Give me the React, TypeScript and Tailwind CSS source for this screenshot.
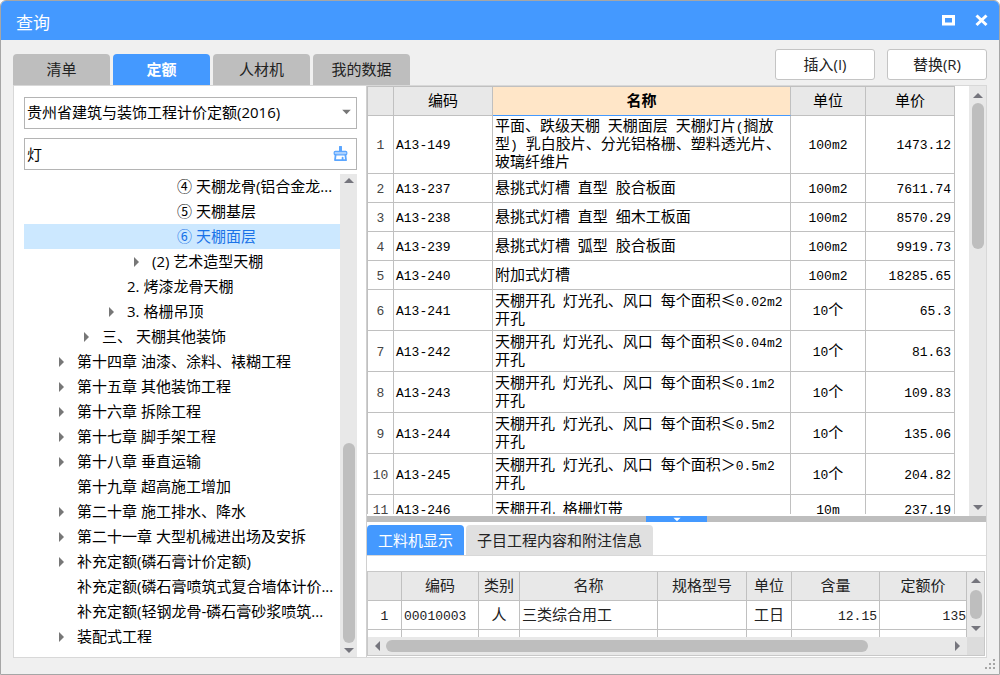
import { useState, type ReactNode } from "react";

type Direction = "up" | "down" | "left" | "right";

const arrowPoints: Record<Direction, string> = {
  up: "0,6 5,1 10,6",
  down: "0,1 5,6 10,1",
  left: "6,0 1,5 6,10",
  right: "1,0 6,5 1,10",
};

function Arrow({ direction, className }: { direction: Direction; className: string }) {
  const upright = direction === "up" || direction === "down";
  return (
    <svg viewBox={upright ? "0 0 10 7" : "0 0 7 10"} className={className} aria-hidden="true">
      <polygon points={arrowPoints[direction]} fill="currentColor" />
    </svg>
  );
}

/* Sets Latin runs in a narrower monospaced face beside the Chinese text. */
function MixedText({ children }: { children: string }) {
  const parts = children.split(/([\x20-\x7e]+)/);
  return (
    <>
      {parts.map((part, i) =>
        i % 2 === 1 ? (
          <span key={i} className="font-['Liberation_Mono','Noto_Sans_CJK_SC',monospace] text-[13px] leading-none">
            {part}
          </span>
        ) : (
          part
        ),
      )}
    </>
  );
}

const categoryTabs = ["清单", "定额", "人材机", "我的数据"];

interface TreeItem {
  label: string;
  indent: string;
  expandable?: boolean;
}

const tree: TreeItem[] = [
  { label: "④ 天棚龙骨(铝合金龙...", indent: "pl-[134px]" },
  { label: "⑤ 天棚基层", indent: "pl-[134px]" },
  { label: "⑥ 天棚面层", indent: "pl-[134px]" },
  { label: "(2) 艺术造型天棚", indent: "pl-[109px]", expandable: true },
  { label: "2. 烤漆龙骨天棚", indent: "pl-[84px]" },
  { label: "3. 格栅吊顶", indent: "pl-[84px]", expandable: true },
  { label: "三、 天棚其他装饰", indent: "pl-[59px]", expandable: true },
  { label: "第十四章 油漆、涂料、裱糊工程", indent: "pl-[34px]", expandable: true },
  { label: "第十五章 其他装饰工程", indent: "pl-[34px]", expandable: true },
  { label: "第十六章 拆除工程", indent: "pl-[34px]", expandable: true },
  { label: "第十七章 脚手架工程", indent: "pl-[34px]", expandable: true },
  { label: "第十八章 垂直运输", indent: "pl-[34px]", expandable: true },
  { label: "第十九章 超高施工增加", indent: "pl-[34px]" },
  { label: "第二十章 施工排水、降水", indent: "pl-[34px]", expandable: true },
  { label: "第二十一章 大型机械进出场及安拆", indent: "pl-[34px]", expandable: true },
  { label: "补充定额(磷石膏计价定额)", indent: "pl-[34px]", expandable: true },
  { label: "补充定额(磷石膏喷筑式复合墙体计价...", indent: "pl-[34px]" },
  { label: "补充定额(轻钢龙骨-磷石膏砂浆喷筑...", indent: "pl-[34px]" },
  { label: "装配式工程", indent: "pl-[34px]", expandable: true },
];

interface Quota {
  code: string;
  name: string;
  unit: string;
  price: string;
  height: string;
}

const oneLine = "h-[29px]";
const twoLines = "h-[41px]";
const threeLines = "h-[58px]";

const quotas: Quota[] = [
  { code: "A13-149", name: "平面、跌级天棚 天棚面层 天棚灯片(搁放型) 乳白胶片、分光铝格栅、塑料透光片、玻璃纤维片", unit: "100m2", price: "1473.12", height: threeLines },
  { code: "A13-237", name: "悬挑式灯槽 直型 胶合板面", unit: "100m2", price: "7611.74", height: oneLine },
  { code: "A13-238", name: "悬挑式灯槽 直型 细木工板面", unit: "100m2", price: "8570.29", height: oneLine },
  { code: "A13-239", name: "悬挑式灯槽 弧型 胶合板面", unit: "100m2", price: "9919.73", height: oneLine },
  { code: "A13-240", name: "附加式灯槽", unit: "100m2", price: "18285.65", height: oneLine },
  { code: "A13-241", name: "天棚开孔 灯光孔、风口 每个面积≤0.02m2 开孔", unit: "10个", price: "65.3", height: twoLines },
  { code: "A13-242", name: "天棚开孔 灯光孔、风口 每个面积≤0.04m2 开孔", unit: "10个", price: "81.63", height: twoLines },
  { code: "A13-243", name: "天棚开孔 灯光孔、风口 每个面积≤0.1m2 开孔", unit: "10个", price: "109.83", height: twoLines },
  { code: "A13-244", name: "天棚开孔 灯光孔、风口 每个面积≤0.5m2 开孔", unit: "10个", price: "135.06", height: twoLines },
  { code: "A13-245", name: "天棚开孔 灯光孔、风口 每个面积＞0.5m2 开孔", unit: "10个", price: "204.82", height: twoLines },
  { code: "A13-246", name: "天棚开孔 格栅灯带", unit: "10m", price: "237.19", height: oneLine },
];

function HeadCell({ children, className = "bg-[#e8e8e8] border-b-[#c0c0c0] font-normal" }: { children?: ReactNode; className?: string }) {
  return <th className={`h-[29px] border-r border-b border-r-[#c0c0c0] px-0 pt-0 pb-[2px] text-center ${className}`}>{children}</th>;
}

function Cell({ children, className = "" }: { children?: ReactNode; className?: string }) {
  return <td className={`border-r border-b border-[#c0c0c0] pt-0 pb-[3px] ${className}`}>{children}</td>;
}

function QuotaTable() {
  return (
    <table className="w-full table-fixed border-separate border-spacing-0 border-t border-l border-[#c0c0c0] font-['Noto_Sans_CJK_SC',sans-serif] leading-[18px]">
      <colgroup>
        <col className="w-[26px]" />
        <col className="w-[99px]" />
        <col />
        <col className="w-[75px]" />
        <col className="w-[89px]" />
      </colgroup>
      <thead>
        <tr>
          <HeadCell />
          <HeadCell>编码</HeadCell>
          <HeadCell className="border-b-[#4499ff] bg-[#ffe6c8] font-bold">名称</HeadCell>
          <HeadCell>单位</HeadCell>
          <HeadCell>单价</HeadCell>
        </tr>
      </thead>
      <tbody>
        {quotas.map((q, i) => (
          <tr key={q.code} className={q.height}>
            <Cell className="px-0 text-center text-[#444]">
              <MixedText>{String(i + 1)}</MixedText>
            </Cell>
            <Cell className="px-[2px]">
              <MixedText>{q.code}</MixedText>
            </Cell>
            <Cell className="px-[2px]">
              <MixedText>{q.name}</MixedText>
            </Cell>
            <Cell className="px-0 text-center">
              <MixedText>{q.unit}</MixedText>
            </Cell>
            <Cell className="px-[3px] text-right">
              <MixedText>{q.price}</MixedText>
            </Cell>
          </tr>
        ))}
      </tbody>
    </table>
  );
}

function ResourceTable() {
  return (
    <table className="w-full table-fixed border-separate border-spacing-0 font-['Noto_Sans_CJK_SC',sans-serif] leading-[18px] text-[#222]">
      <colgroup>
        <col className="w-[34px]" />
        <col className="w-[77px]" />
        <col className="w-[41px]" />
        <col />
        <col className="w-[89px]" />
        <col className="w-[45px]" />
        <col className="w-[88px]" />
        <col className="w-[87px]" />
      </colgroup>
      <thead>
        <tr>
          {["", "编码", "类别", "名称", "规格型号", "单位", "含量", "定额价"].map((h) => (
            <HeadCell key={h}>{h}</HeadCell>
          ))}
        </tr>
      </thead>
      <tbody>
        <tr className="h-[29px]">
          <Cell className="px-0 text-center"><MixedText>1</MixedText></Cell>
          <Cell className="px-[2px]"><MixedText>00010003</MixedText></Cell>
          <Cell className="px-0 text-center">人</Cell>
          <Cell className="px-[2px]">三类综合用工</Cell>
          <Cell />
          <Cell className="px-0 text-center">工日</Cell>
          <Cell className="px-[2px] text-right"><MixedText>12.15</MixedText></Cell>
          <Cell className="px-0 text-right"><MixedText>135</MixedText></Cell>
        </tr>
        <tr className="h-[29px]">
          {[0, 1, 2, 3, 4, 5, 6, 7].map((n) => (
            <Cell key={n} />
          ))}
        </tr>
      </tbody>
    </table>
  );
}

export default function App() {
  const [tab, setTab] = useState(1);
  const [detailTab, setDetailTab] = useState(0);
  const [selected, setSelected] = useState(2);
  const [query, setQuery] = useState("灯");

  return (
    <div
      lang="zh-CN"
      className="relative flex h-screen flex-col overflow-hidden rounded-t-md border border-[#a6a6a6] bg-[#f0f0f0] font-['Open_Sans','Noto_Sans_CJK_SC',sans-serif] text-[15px] leading-5 text-black"
    >
      <header className="flex h-[39px] shrink-0 items-center justify-between bg-[#4499ff] pr-[11px] pl-[15px] text-white">
        <h1 className="pt-1 text-[17px] leading-6">查询</h1>
        <div className="flex gap-5">
          <button aria-label="最大化">
            <svg viewBox="0 0 13 13" className="size-[13px]">
              <rect x="1.5" y="2.5" width="10" height="7.5" fill="none" stroke="currentColor" strokeWidth="3" />
            </svg>
          </button>
          <button aria-label="关闭">
            <svg viewBox="0 0 13 13" className="size-[13px]">
              <path d="M1.5 1.5l10 9.5M11.5 1.5l-10 9.5" stroke="currentColor" strokeWidth="3" />
            </svg>
          </button>
        </div>
      </header>

      <div className="flex shrink-0 justify-between pr-3 pl-3">
        <div role="tablist" className="flex gap-[3px] pt-[14px]">
          {categoryTabs.map((name, i) => (
            <button
              key={name}
              role="tab"
              aria-selected={i === tab}
              onClick={() => setTab(i)}
              className={
                i === tab
                  ? "h-[31px] w-[97px] rounded-t-sm bg-[#4499ff] pb-[2px] font-bold text-white"
                  : "h-[31px] w-[97px] rounded-t-sm bg-[#bebebe] pb-[2px] text-[#222]"
              }
            >
              {name}
            </button>
          ))}
        </div>
        <div className="flex gap-3 pt-[9px]">
          <button className="h-[31px] w-[100px] rounded-[3px] border border-[#c4c4c4] bg-white pb-[2px] text-[#222]">插入(I)</button>
          <button className="h-[31px] w-[100px] rounded-[3px] border border-[#c4c4c4] bg-white pb-[2px] text-[#222]">替换(R)</button>
        </div>
      </div>

      <main className="mx-3 mb-4 flex min-h-0 flex-1 border border-[#d8d8d8] bg-white">
        <aside className="flex w-[352px] shrink-0 flex-col pt-[11px] pr-[9px] pl-[10px]">
          <div className="relative shrink-0">
            <select
              aria-label="定额库"
              className="h-8 w-full appearance-none rounded-none border border-[#b4b4b4] bg-white pb-[2px] pl-[2px] outline-none"
            >
              <option>贵州省建筑与装饰工程计价定额(2016)</option>
            </select>
            <Arrow direction="down" className="pointer-events-none absolute top-3 right-[6px] h-[6px] w-[9px] text-[#777]" />
          </div>
          <div className="mt-[9px] flex h-8 shrink-0 items-center border border-[#b4b4b4] pr-2 pl-[2px]">
            <input
              aria-label="查询内容"
              value={query}
              onChange={(e) => setQuery(e.target.value)}
              className="min-w-0 flex-1 outline-none"
            />
            <button aria-label="清除" onClick={() => setQuery("")} className="text-[#5ba6ff]">
              <svg viewBox="0 0 15 16" className="h-4 w-[15px]" fill="none" stroke="currentColor">
                <path d="M7.5 1v5" strokeWidth="3" strokeLinecap="round" />
                <rect x="1.2" y="5.4" width="12.6" height="3.4" rx="1" fill="#a9d0ff" strokeWidth="1.2" />
                <path d="M2.6 9L2 14.2h11L12.4 9M9.6 14v-2.4" strokeWidth="1.8" strokeLinecap="round" strokeLinejoin="round" />
              </svg>
            </button>
          </div>
          <div className="mt-1 flex min-h-0 flex-1">
            <ul role="tree" aria-label="定额章节" className="min-w-0 flex-1 overflow-hidden">
              {tree.map((item, i) => (
                <li key={item.label} role="treeitem" aria-selected={i === selected}>
                  <button
                    onClick={() => setSelected(i)}
                    className={`flex h-[25px] w-full items-center whitespace-nowrap ${item.indent} ${
                      i === selected ? "bg-[#cce8ff] text-[#1a73e8]" : ""
                    }`}
                  >
                    <span className="flex w-[19px] shrink-0">
                      {item.expandable && <Arrow direction="right" className="h-[10px] w-[7px] text-[#777]" />}
                    </span>
                    <span className="pb-[2px]">{item.label}</span>
                  </button>
                </li>
              ))}
            </ul>
            <div className="flex w-[17px] shrink-0 flex-col items-center bg-[#e8e8e8] py-[3px]">
              <Arrow direction="up" className="h-[7px] w-[10px] text-[#75757d]" />
              <div className="flex-[257_1_0%]" />
              <div className="w-3 flex-[199_1_0%] rounded-full bg-[#bebebe]" />
              <Arrow direction="down" className="mt-1 h-[7px] w-[10px] text-[#75757d]" />
            </div>
          </div>
        </aside>

        <section className="flex min-w-0 flex-1 flex-col border-l border-[#d0d0d0]">
          <div className="flex min-h-0 flex-1">
            <div className="mb-[2px] min-w-0 flex-1 overflow-hidden pr-[14px]">
              <QuotaTable />
            </div>
            <div className="flex w-[17px] shrink-0 flex-col items-center bg-[#e8e8e8] pt-[6px] pb-[5px]">
              <Arrow direction="up" className="h-[7px] w-[10px] text-[#75757d]" />
              <div className="mt-1 w-3 flex-[146_1_0%] rounded-full bg-[#bebebe]" />
              <div className="flex-[254_1_0%]" />
              <Arrow direction="down" className="h-[7px] w-[10px] text-[#75757d]" />
            </div>
          </div>

          <div className="flex h-[6px] shrink-0 justify-center bg-[#bebebe]">
            <button aria-label="折叠" className="flex w-[61px] items-center justify-center bg-[#4499ff] text-white">
              <Arrow direction="down" className="h-[5px] w-[8px]" />
            </button>
          </div>

          <div role="tablist" className="flex shrink-0 gap-[2px] border-b border-[#d8d8d8] pt-[3px]">
            {["工料机显示", "子目工程内容和附注信息"].map((name, i) => (
              <button
                key={name}
                role="tab"
                aria-selected={i === detailTab}
                onClick={() => setDetailTab(i)}
                className={
                  i === detailTab
                    ? "h-[30px] rounded-t-sm bg-[#4499ff] px-[11px] text-white"
                    : "h-[30px] rounded-t-sm bg-[#e0e0e0] px-[11px] text-[#222]"
                }
              >
                {name}
              </button>
            ))}
          </div>

          <div className="mt-[15px] mr-px mb-px shrink-0 border border-[#c8c8c8]">
            <div className="flex h-[65px]">
              <div className="min-w-0 flex-1 overflow-hidden">
                <ResourceTable />
              </div>
              <div className="flex w-[17px] shrink-0 flex-col items-center bg-[#e8e8e8] py-[5px]">
                <Arrow direction="up" className="h-[7px] w-[10px] text-[#75757d]" />
                <div className="my-[6px] w-3 flex-1 rounded-full bg-[#bebebe]" />
                <Arrow direction="down" className="h-[7px] w-[10px] text-[#75757d]" />
              </div>
            </div>
            <div className="flex h-[18px] bg-[#e8e8e8]">
              <div className="flex flex-1 items-center pr-[6px] pl-[6px]">
                <Arrow direction="left" className="h-[10px] w-[7px] text-[#75757d]" />
                <div className="ml-[5px] h-3 flex-[482_1_0%] rounded-full bg-[#bebebe]" />
                <div className="flex-[86_1_0%]" />
                <Arrow direction="right" className="h-[10px] w-[7px] text-[#75757d]" />
              </div>
              <div className="w-[17px] bg-[#dcdcdc]" />
            </div>
          </div>
        </section>
      </main>

      <svg viewBox="0 0 11 11" className="absolute right-[3px] bottom-1 size-[11px] text-[#a6a6a6]" fill="currentColor" aria-hidden="true">
        <path d="M8 0h2v2H8zM4 4h2v2H4zM8 4h2v2H8zM0 8h2v2H0zM4 8h2v2H4zM8 8h2v2H8z" />
      </svg>
    </div>
  );
}
